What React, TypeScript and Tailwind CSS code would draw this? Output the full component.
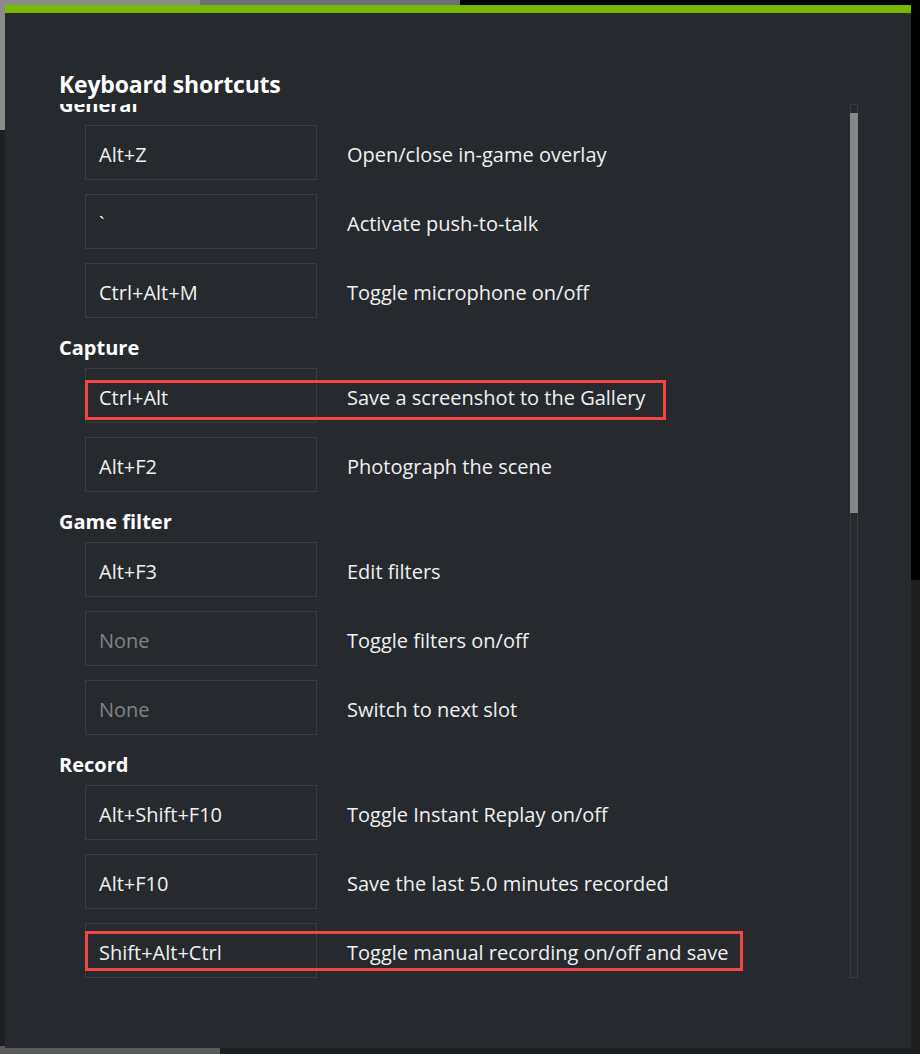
const sections = [
  {
    title: "General",
    rows: [
      { keys: "Alt+Z", label: "Open/close in-game overlay" },
      { keys: "`", label: "Activate push-to-talk" },
      { keys: "Ctrl+Alt+M", label: "Toggle microphone on/off" },
    ],
  },
  {
    title: "Capture",
    rows: [
      { keys: "Ctrl+Alt", label: "Save a screenshot to the Gallery", mark: "a" },
      { keys: "Alt+F2", label: "Photograph the scene" },
    ],
  },
  {
    title: "Game filter",
    rows: [
      { keys: "Alt+F3", label: "Edit filters" },
      { keys: "", label: "Toggle filters on/off" },
      { keys: "", label: "Switch to next slot" },
    ],
  },
  {
    title: "Record",
    rows: [
      { keys: "Alt+Shift+F10", label: "Toggle Instant Replay on/off" },
      { keys: "Alt+F10", label: "Save the last 5.0 minutes recorded" },
      { keys: "Shift+Alt+Ctrl", label: "Toggle manual recording on/off and save", mark: "b" },
    ],
  },
];

type Row = { keys: string; label: string; mark?: string };

const ShortcutRow = ({ row }: { row: Row }) => {
  return (
    <div className="relative flex items-center">
      <div className="ml-[26px] w-[232px] h-[55px] border border-[#393d41] flex items-center px-[13px] pt-[4px]">
        {row.keys ? (
          <span className="text-[#f0f0f0]">{row.keys}</span>
        ) : (
          <span className="text-[#808285]">None</span>
        )}
      </div>
      <div className="ml-[30px] pt-[4px] text-[#f0f0f0]">{row.label}</div>
      {row.mark === "a" && (
        <div className="absolute left-[26px] top-[12px] w-[581px] h-[40px] border-[3px] border-[#f24545]" />
      )}
      {row.mark === "b" && (
        <div className="absolute left-[26px] top-[8px] w-[658px] h-[40px] border-[3px] border-[#f24545]" />
      )}
    </div>
  );
};

export default function App() {
  return (
    <div
      className="w-[920px] h-[1054px] overflow-hidden bg-[#1c1e20] relative"
      style={{ fontFamily: '"Open Sans", "Noto Sans", sans-serif' }}
    >
      {/* backdrop bits around the dialog */}
      <div className="absolute left-0 top-0 w-[200px] h-[130px] bg-[#8a8a8a]" />
      <div className="absolute left-[200px] top-0 w-[260px] h-[5px] bg-[#6b7078]" />
      <div className="absolute left-[460px] top-0 w-[460px] h-[5px] bg-black" />
      <div className="absolute left-[900px] top-0 w-[20px] h-[580px] bg-black" />
      <div className="absolute left-0 bottom-0 w-[220px] h-[8px] bg-[#5a5a5a]" />

      <div className="relative ml-[5px] mt-[5px] w-[906px] h-[1043px] bg-[#262a2e] flex flex-col">
        <div className="h-[8px] bg-[#76b900]" />
        <div className="pl-[54px] pt-[55px]">
          <h1 className="text-[23px] font-bold text-white leading-[32px] tracking-[-0.2px]">
            Keyboard shortcuts
          </h1>
        </div>
        <div className="flex pl-[54px] mt-[4px]">
          <div className="w-[780px] h-[876px] overflow-hidden">
            <div className="-mt-[29px] text-[20px]">
              {sections.map((s) => (
                <div key={s.title}>
                  <div className="mt-[16px] text-[20px] font-bold text-white leading-[28px] h-[28px]">
                    {s.title}
                  </div>
                  <div className="mt-[6px] flex flex-col gap-[14px]">
                    {s.rows.map((r) => (
                      <ShortcutRow key={r.label} row={r} />
                    ))}
                  </div>
                </div>
              ))}
            </div>
          </div>
          <div className="ml-[11px] w-[8px] h-[874px] border border-[#363b40] pt-[8px]">
            <div className="h-[400px] bg-[#878787] -mx-px" />
          </div>
        </div>
      </div>
    </div>
  );
}
